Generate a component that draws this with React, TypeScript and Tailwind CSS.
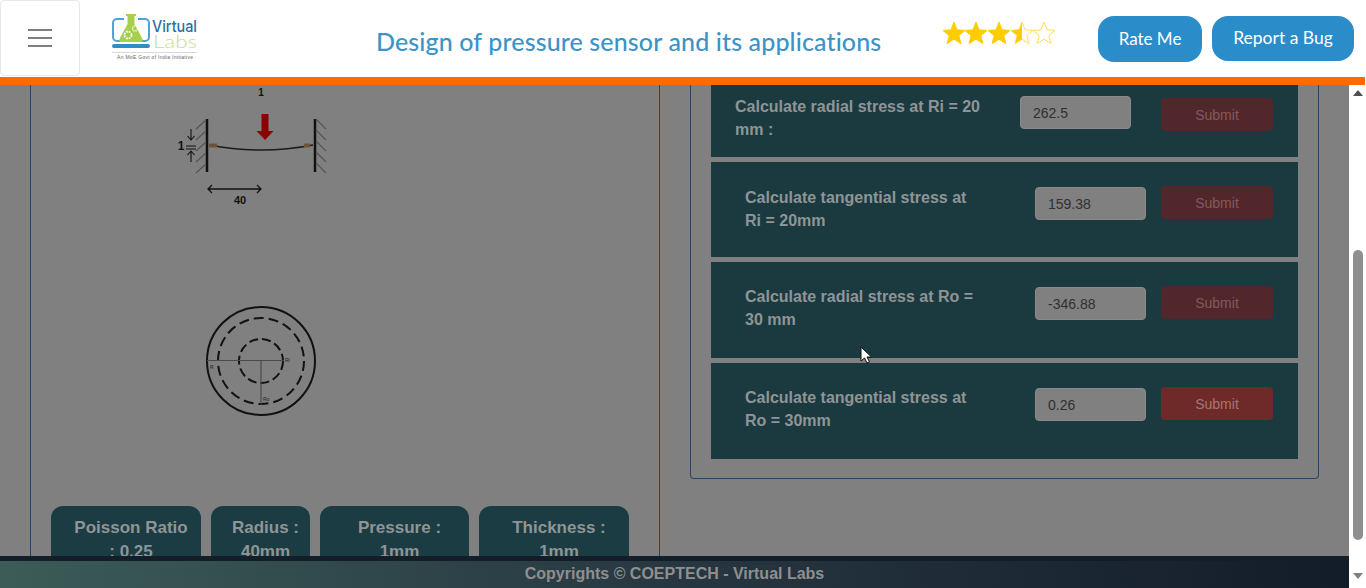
const Star = ({ x, fill }: { x: number; fill: "full" | "half" | "none" }) => {
  const pts = [
    [12, 1], [15, 8.8], [23, 9.4], [16.8, 14.6], [18.9, 22.6], [12, 18.2], [5.1, 22.6], [7.2, 14.6], [1, 9.4], [9, 8.8],
  ]
    .map(([a, b]) => `${a + x},${b}`)
    .join(" ");
  const half = `${12 + x},1 ${9 + x},8.8 ${1 + x},9.4 ${7.2 + x},14.6 ${5.1 + x},22.6 ${12 + x},18.2`;
  return (
    <>
      <polygon points={pts} fill={fill === "full" ? "#ffcc00" : "none"} stroke={fill === "full" ? "#ffcc00" : "#ffdc5c"} strokeWidth="1" />
      {fill === "half" && <polygon points={half} fill="#ffcc00" />}
    </>
  );
};

const Logo = () => (
  <svg width="100" height="50" viewBox="0 0 100 50" className="block">
    <path d="M9 28H6a4 4 0 0 1-4-4V10a4 4 0 0 1 4-4h7M27 6h7a4 4 0 0 1 4 4v14a4 4 0 0 1-4 4h-3" fill="none" stroke="#4aa3df" strokeWidth="2" />
    <rect x="1" y="31" width="38" height="4" rx="2" fill="#2f8ccb" />
    <path d="M15 1h10v2h-1.500v8l8 15a2 2 0 0 1-2 3H10.500a2 2 0 0 1-2-3l8-15V3H15z" fill="#a5cf4c" />
    <circle cx="17" cy="22" r="3.500" fill="none" stroke="#fff" strokeWidth="1.800" strokeDasharray="1.800 1" />
    <circle cx="24" cy="15.500" r="2.500" fill="none" stroke="#fff" strokeWidth="1.300" strokeDasharray="1.300 0.800" />
    <text x="41" y="19" fontSize="16" fontWeight="500" fill="#2a6fa5" fontFamily="Inter, sans-serif" textLength="45" lengthAdjust="spacingAndGlyphs">Virtual</text>
    <text x="42" y="35" fontSize="18" fontWeight="300" fill="#c3e08f" fontFamily="Lato, sans-serif" textLength="44" lengthAdjust="spacingAndGlyphs">Labs</text>
    <line x1="1" y1="39.500" x2="86" y2="39.500" stroke="#cfcfcf" strokeWidth="0.800" />
    <text x="6" y="46" fontSize="5" fill="#666" fontFamily="Liberation Sans, sans-serif" textLength="76">An MoE Govt of India Initiative</text>
  </svg>
);

const Header = () => (
  <header className="h-[85px] shrink-0 bg-white font-['Lato',sans-serif]">
    <div className="h-[77px] flex items-start">
      <button className="w-[80px] h-[76px] border border-[#e8e8e8] rounded flex flex-col items-center justify-center gap-[6px]">
        <span className="block w-6 h-[2px] bg-[#808080]" />
        <span className="block w-6 h-[2px] bg-[#808080]" />
        <span className="block w-6 h-[2px] bg-[#808080]" />
      </button>
      <div className="ml-[31px] mt-[13px]">
        <Logo />
      </div>
      <h1 className="ml-[165px] mt-[25px] text-[25px] leading-8 text-[#3a94c8] font-medium whitespace-nowrap tracking-[0.13px]">
        Design of pressure sensor and its applications
      </h1>
      <svg width="116" height="26" viewBox="0 0 116 26" className="ml-[61px] mt-[21px] shrink-0">
        <Star x={0} fill="full" />
        <Star x={22} fill="full" />
        <Star x={45} fill="full" />
        <Star x={68} fill="half" />
        <Star x={90} fill="none" />
      </svg>
      <div className="ml-auto mr-3 mt-4 flex items-start gap-[10px]">
        <button className="w-[104px] h-[46px] rounded-2xl bg-[#2a8cc8] text-white text-[17px]">Rate Me</button>
        <button className="w-[142px] h-[45px] rounded-2xl bg-[#2a8cc8] text-white text-[17.500px]">Report a Bug</button>
      </div>
    </div>
    <div className="h-2 bg-[#ff6a00] mr-px" />
  </header>
);

const BeamFigure = () => (
  <svg width="180" height="130" viewBox="160 85 180 130" className="block ml-[129px] shrink-0" fill="none">
    <text x="261" y="96" fontSize="10" fontWeight="700" fill="#111" textAnchor="middle">1</text>
    <line x1="207" y1="119" x2="207" y2="172" stroke="#111" strokeWidth="2.500" />
    <line x1="315" y1="119" x2="315" y2="172" stroke="#111" strokeWidth="2.500" />
    <path d="M206 120l-10 9M206 131l-10 9M206 142l-10 9M206 153l-10 9M206 164l-10 9M316 119l10 10M316 130l10 10M316 141l10 10M316 152l10 10M316 163l10 10" stroke="#555" strokeWidth="1.200" />
    <path d="M209 145Q262 155 313 145" stroke="#1a1a1a" strokeWidth="1.500" />
    <rect x="209" y="143.500" width="8" height="4" fill="#6e5238" />
    <rect x="304" y="143.500" width="6" height="4" fill="#6e5238" />
    <path d="M261.500 114h7v17h5l-8.500 9-8.500-9h5z" fill="#8b0000" />
    <text x="181" y="150" fontSize="12" fontWeight="700" fill="#111" textAnchor="middle">1</text>
    <path d="M191 129v11M187.500 136l3.500 4 3.500-4M186 146h10M186 149h10M191 162v-11M187.500 155l3.500-4 3.500 4" stroke="#111" strokeWidth="1.100" />
    <path d="M208 189h53M212 185l-4 4 4 4M257 185l4 4-4 4" stroke="#111" strokeWidth="1.300" />
    <text x="240" y="204" fontSize="11" fontWeight="700" fill="#111" textAnchor="middle">40</text>
  </svg>
);

const CircleFigure = () => (
  <svg width="124" height="124" viewBox="200 300 124 124" className="block ml-[169px] mt-[85px] shrink-0" fill="none">
    <circle cx="261" cy="361" r="54" stroke="#111" strokeWidth="2" />
    <circle cx="261" cy="361" r="43" stroke="#111" strokeWidth="2" strokeDasharray="10 5" />
    <circle cx="261" cy="361" r="22" stroke="#111" strokeWidth="2" strokeDasharray="9 4" />
    <path d="M207 360.500h77M261 360.500v44" stroke="#4a4a4a" strokeWidth="1.200" />
    <text x="210" y="369" fontSize="5" fill="#222">R</text>
    <text x="285" y="362" fontSize="5" fill="#222">Ri</text>
    <text x="263" y="401" fontSize="5" fill="#222">Ro</text>
  </svg>
);

const chips = [
  { label: "Poisson Ratio", value: ": 0.25", width: "w-[150px]" },
  { label: "Radius :", value: "40mm", width: "w-[99px]" },
  { label: "Pressure :", value: "1mm", width: "w-[149px]" },
  { label: "Thickness :", value: "1mm", width: "w-[150px]" },
];

const LeftPanel = () => (
  <section className="ml-[30px] w-[630px] shrink-0 border-x border-[#274561] flex flex-col">
    <BeamFigure />
    <CircleFigure />
    <div className="mt-[82px] ml-5 flex gap-[10px]">
      {chips.map((chip) => (
        <div
          key={chip.label}
          className={`${chip.width} shrink-0 h-[72px] pt-[10px] pl-5 pr-[10px] rounded-xl bg-[#1b3c42] text-[#8f9596] text-[17px] leading-6 font-bold text-center`}
        >
          <div className="whitespace-nowrap">{chip.label}</div>
          <div>{chip.value}</div>
        </div>
      ))}
    </div>
  </section>
);

const rows = [
  { l1: "Calculate radial stress at Ri = 20", l2: "mm :", value: "262.5", h: "h-[72px]", mb: "mb-[5px]", textPad: "pl-[24px] pt-[10px] w-[309px]", inputPt: "pt-[11px]", btnPt: "pt-[13px]", btn: "bg-[#52272c] text-[#85595d]" },
  { l1: "Calculate tangential stress at", l2: "Ri = 20mm", value: "159.38", h: "h-[95px]", mb: "mb-[5px]", textPad: "pl-[34px] pt-[24px] w-[324px]", inputPt: "pt-[25px]", btnPt: "pt-[24px]", btn: "bg-[#52272c] text-[#85595d]" },
  { l1: "Calculate radial stress at Ro =", l2: "30 mm", value: "-346.88", h: "h-[96px]", mb: "mb-[5px]", textPad: "pl-[34px] pt-[23px] w-[324px]", inputPt: "pt-[25px]", btnPt: "pt-[24px]", btn: "bg-[#52272c] text-[#85595d]" },
  { l1: "Calculate tangential stress at", l2: "Ro = 30mm", value: "0.26", h: "h-[96px]", mb: "", textPad: "pl-[34px] pt-[23px] w-[324px]", inputPt: "pt-[25px]", btnPt: "pt-[24px]", btn: "bg-[#6d2a28] text-[#a87674]" },
];

const RightPanel = () => (
  <section className="ml-[30px] w-[629px] h-[394px] shrink-0 border-x border-b border-[#274561] rounded-b px-5">
    {rows.map((row) => (
      <div key={row.value} className={`${row.h} ${row.mb} bg-[#1b3a40] flex`}>
        <div className={`${row.textPad} shrink-0 text-[16px] leading-[23px] font-bold text-[#8f9596]`}>
          <div className="whitespace-nowrap">{row.l1}</div>
          <div>{row.l2}</div>
        </div>
        <div className={`${row.inputPt} shrink-0`}>
          <input
            readOnly
            value={row.value}
            className="w-[111px] h-[33px] block px-3 rounded bg-[#808080] border border-[#8a8a8a] text-[14px] text-[#2f2f2f] outline-none"
          />
        </div>
        <div className={`${row.btnPt} ml-auto mr-[25px]`}>
          <button className={`w-[112px] h-[33px] pt-px rounded text-[14px] ${row.btn}`}>Submit</button>
        </div>
      </div>
    ))}
  </section>
);

const Scrollbar = () => (
  <div className="w-[17px] shrink-0 bg-white flex flex-col items-center">
    <svg width="10" height="6" viewBox="0 0 10 6" className="mt-[5px] shrink-0">
      <path d="M0 6l5-6 5 6z" fill="#505050" />
    </svg>
    <div className="mt-[154px] w-[10px] h-[290px] rounded-[5px] bg-[#8f8f8f]" />
    <svg width="10" height="6" viewBox="0 0 10 6" className="mt-[33px] shrink-0">
      <path d="M0 0l5 6 5-6z" fill="#808080" />
    </svg>
  </div>
);

export default function App() {
  return (
    <div className="relative w-[1366px] h-[588px] overflow-hidden flex flex-col font-['Liberation_Sans',sans-serif] bg-white">
      <Header />
      <main className="flex-1 min-h-0 flex">
        <div className="flex-1 min-w-0 bg-[#808080] flex items-start overflow-hidden">
          <LeftPanel />
          <RightPanel />
        </div>
        <Scrollbar />
      </main>

      <footer className="absolute left-0 bottom-0 w-[1349px] h-8 pb-[2px] border-t-[5px] border-[#141e28] bg-gradient-to-r from-[#3b5c57] via-[#273741] to-[#131c29] text-[#8f8f8f] text-[16px] font-bold flex items-center justify-center">
        Copyrights © COEPTECH - Virtual Labs
      </footer>

      {/* mouse pointer caught in the shot */}
      <svg width="13" height="18" viewBox="0 0 13 18" className="absolute left-[860px] top-[346px]">
        <path d="M1 1v14l3.500-3 2.500 5 2.500-1-2.500-5h4.500z" fill="#fff" stroke="#111" strokeWidth="1" />
      </svg>
    </div>
  );
}
